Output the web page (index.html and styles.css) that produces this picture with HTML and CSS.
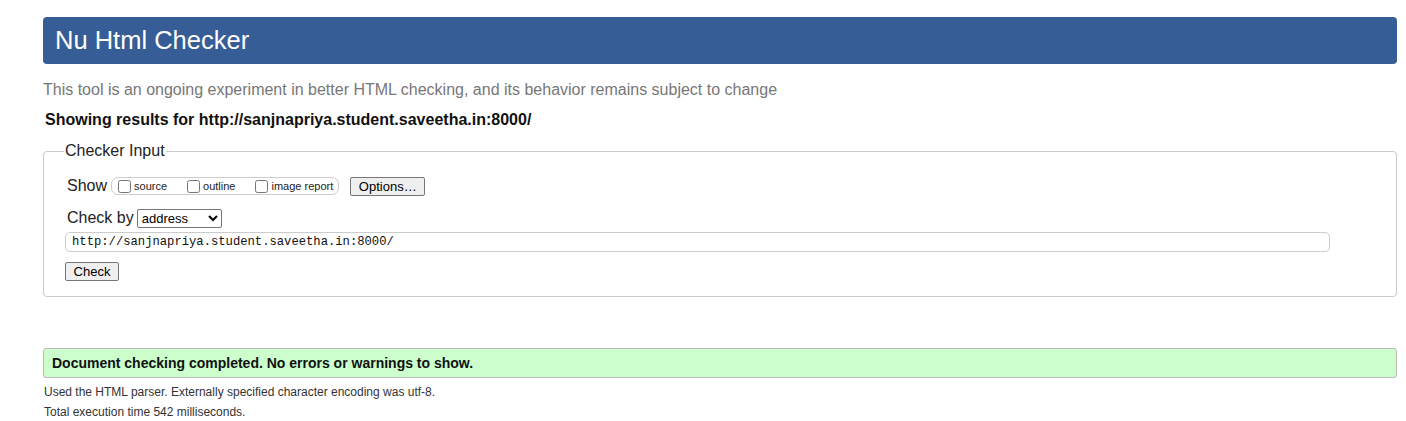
FILE: index.html
```html
<!DOCTYPE html>
<html lang="en">
<head>
<meta charset="utf-8">
<title>Nu Html Checker</title>
<link rel="stylesheet" href="styles.css">
</head>
<body>
<div class="page">
  <header class="banner"><h1 class="title">Nu Html Checker</h1></header>
  <p class="tagline">This tool is an ongoing experiment in better HTML checking, and its behavior remains subject to change</p>
  <p class="showing">Showing results for http://sanjnapriya.student.saveetha.in:8000/</p>
  <form class="checker">
    <fieldset class="input-set">
      <legend class="input-legend">Checker Input</legend>
      <div class="row show-row">
        <span class="label">Show</span>
        <fieldset class="show-opts">
          <label class="opt"><input type="checkbox"><span>source</span></label>
          <label class="opt"><input type="checkbox"><span>outline</span></label>
          <label class="opt"><input type="checkbox"><span>image report</span></label>
        </fieldset>
        <button type="button" class="btn options-btn">Options…</button>
      </div>
      <div class="row by-row">
        <span class="label">Check by</span>
        <select class="by-select"><option>address</option></select>
      </div>
      <input class="url" type="text" value="http://sanjnapriya.student.saveetha.in:8000/">
      <div class="row">
        <button type="button" class="btn check-btn">Check</button>
      </div>
    </fieldset>
  </form>
  <div class="result">Document checking completed. No errors or warnings to show.</div>
  <p class="note">Used the HTML parser. Externally specified character encoding was utf-8.</p>
  <p class="note">Total execution time 542 milliseconds.</p>
</div>
</body>
</html>
```
FILE: styles.css
```css
html, body {
  margin: 0;
  padding: 0;
  background: #fff;
}
body {
  font-family: "Liberation Sans", Arial, sans-serif;
  color: #222;
}
.page {
  padding: 17px 9px 0 43px;
}
.banner {
  background: #365d95;
  border-radius: 4px;
  height: 47px;
  display: flex;
  align-items: center;
  padding-left: 12px;
}
.title {
  margin: 0;
  font-size: 25.5px;
  font-weight: normal;
  color: #fff;
  line-height: 1;
}
.tagline {
  margin: 16px 0 0 0;
  font-size: 16px;
  line-height: 20px;
  color: #777;
}
.showing {
  margin: 10px 0 0 2px;
  font-size: 16px;
  line-height: 20px;
  font-weight: bold;
  color: #111;
}
.checker {
  margin: 11px 0 0 0;
}
.input-set {
  margin: 0;
  border: 1px solid #ccc;
  border-radius: 4px;
  padding: 15px 22px 15px 22px;
  display: flex;
  flex-direction: column;
}
.input-legend {
  font-size: 16px;
  line-height: 20px;
  padding: 0 1px;
  margin-left: -2px;
  color: #222;
}
.row {
  display: flex;
  align-items: center;
}
.show-row {
  height: 20px;
}
.label {
  font-size: 16px;
  line-height: 20px;
  color: #222;
  margin-left: 1px;
}
.show-opts {
  margin: 0 0 0 4px;
  padding: 0 5px 0 2px;
  border: 1px solid #ccc;
  border-radius: 7px;
  height: 16px;
  display: flex;
  align-items: center;
  gap: 0;
}
.opt {
  display: flex;
  align-items: center;
  font-size: 11px;
  margin-right: 16px;
}
.opt:last-child {
  margin-right: 0;
}
.opt input {
  margin: 0 3px 0 4px;
  width: 13px;
  height: 13px;
}
.btn {
  font-family: "Liberation Sans", Arial, sans-serif;
  font-size: 13px;
  background: #efefef;
  border: 1px solid #767676;
  border-radius: 2px;
  color: #000;
  height: 19px;
  padding: 0 6px;
  line-height: 15px;
}
.options-btn {
  margin-left: 11px;
  width: 75px;
}
.by-row {
  margin-top: 12px;
  height: 20px;
}
.by-select {
  margin-left: 3px;
  width: 85px;
  height: 19px;
  font-family: "Liberation Sans", Arial, sans-serif;
  font-size: 13px;
  border: 1px solid #767676;
  border-radius: 2px;
  background: #fff;
  color: #000;
}
.url {
  margin: 4px 44px 0 -1px;
  height: 20px;
  box-sizing: border-box;
  border: 1px solid #ccc;
  border-radius: 5px;
  padding: 0 6px;
  font-family: "Liberation Mono", "Courier New", monospace;
  font-size: 12.2px;
  color: #111;
}
.check-btn {
  margin-top: 10px;
  margin-left: -1px;
  width: 54px;
}
.result {
  margin-top: 51px;
  background: #ccffcc;
  border: 1px solid #bbb;
  border-radius: 3px;
  height: 28px;
  display: flex;
  align-items: center;
  padding-left: 8px;
  font-size: 14px;
  font-weight: bold;
  color: #111;
}
.note {
  margin: 0 0 0 1px;
  font-size: 12px;
  line-height: 20px;
  color: #333;
}
.result + .note {
  margin-top: 4px;
}
```
